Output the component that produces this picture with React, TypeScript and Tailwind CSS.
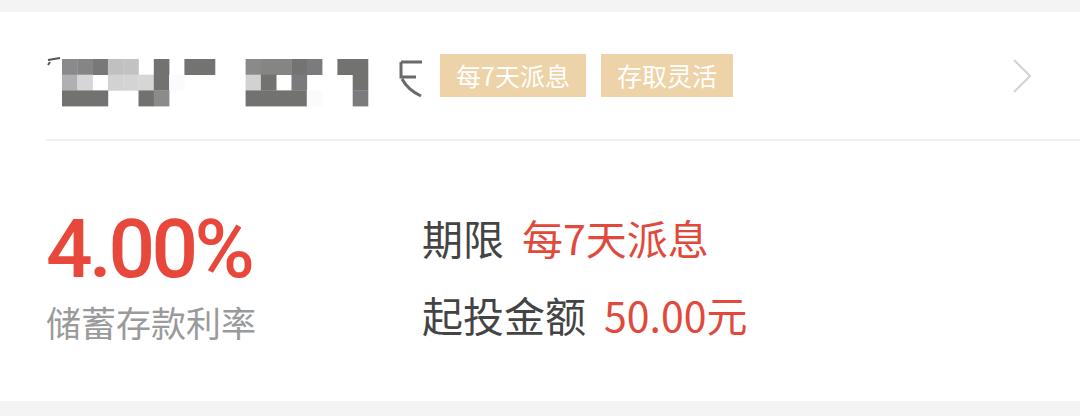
import React from 'react'

const cjk = { fontFamily: '"Noto Sans CJK SC", "Noto Sans", sans-serif' }

// pixelated (mosaic) product name, blocks of ~15.3px
const mosaic: [number, number, number, string][] = [
  // col, row, span, colour
  [0, 0, 1, '#8a898b'],
  [1, 0, 1, '#858684'],
  [2, 0, 1, '#787779'],
  [3, 0, 1, '#c0c0c0'],
  [4, 0, 1, '#c2c2c2'],
  [6, 0, 1, '#727370'],
  [8, 0, 2, '#737472'],
  [0, 1, 1, '#b0afb1'],
  [1, 1, 1, '#d6d5d7'],
  [3, 1, 1, '#d2d2d2'],
  [4, 1, 1, '#d4d4d6'],
  [5, 1, 1, '#d6d6d6'],
  [6, 1, 1, '#727370'],
  [7, 1, 1, '#fcfafc'],
  [0, 2, 3, '#727370'],
  [5, 2, 1, '#717270'],
  [6, 2, 1, '#8b8c8a'],
  [12, 0, 1, '#8a898b'],
  [13, 0, 2, '#858684'],
  [15, 0, 1, '#737472'],
  [16, 0, 1, '#7b7a7c'],
  [18, 0, 2, '#727370'],
  [12, 1, 1, '#d2d2d2'],
  [13, 1, 1, '#727370'],
  [15, 1, 1, '#7a797b'],
  [19, 1, 1, '#727370'],
  [12, 2, 4, '#727370'],
  [16, 2, 1, '#fcfafc'],
  [19, 2, 1, '#7b7a7c'],
]

const Mosaic = () => (
  <svg width="380" height="70" viewBox="0 0 380 70" className="shrink-0">
    <path d="M2 19 L14 17 M4 21 L2 24" stroke="#555" strokeWidth="2" fill="none" />
    {mosaic.map(([c, r, s, col], i) => (
      <rect
        key={i}
        x={16 + c * 15.3}
        y={18 + r * 15.7}
        width={15.3 * s + 0.3}
        height={16}
        fill={col}
      />
    ))}
    <path
      d="M355 21 H376 M355 21 V36 H370 M356 38 Q362 49 375 55"
      stroke="#6a6a6a"
      strokeWidth="3"
      fill="none"
    />
  </svg>
)

const Tag = ({ text }: { text: string }) => (
  <span className="h-[43px] px-[16px] flex items-center bg-[#eed3a8] text-white text-[25px] leading-none">
    {text}
  </span>
)

export default function App() {
  return (
    <div className="w-[1080px] h-[416px] bg-[#f4f4f4] pt-[12px]" style={cjk}>
      <div className="h-[389px] bg-white pl-[46px]">
        <div className="h-[129px] flex items-center border-b-2 border-[#f0f0f0] pr-[46px]">
          <Mosaic />
          <div className="flex gap-[15px] ml-[14px]">
            <Tag text="每7天派息" />
            <Tag text="存取灵活" />
          </div>
          <svg width="22" height="38" viewBox="0 0 22 38" className="ml-auto mr-[1px]">
            <path d="M3 3 L19 19 L3 35" stroke="#d4d4d4" strokeWidth="2.2" fill="none" />
          </svg>
        </div>
        <div className="flex pt-[64px]">
          <div className="w-[376px] flex flex-col pt-[3px]">
            <div
              className="text-[82px] leading-none font-medium text-[#e8483b] tracking-[-3.5px]"
              style={{ fontFamily: 'Roboto, "Liberation Sans", sans-serif' }}
            >
              4.00%
            </div>
            <div className="mt-[14px] text-[35px] leading-none text-[#9a9a9a]">储蓄存款利率</div>
          </div>
          <div className="flex flex-col gap-[36px] pt-[12px]">
            <div className="flex items-center text-[41px] leading-none">
              <span className="text-[#444]">期限</span>
              <span className="ml-[18px] text-[#e0493c]">每7天派息</span>
            </div>
            <div className="flex items-center text-[41px] leading-none">
              <span className="text-[#444]">起投金额</span>
              <span className="ml-[18px] text-[#e0493c]">50.00元</span>
            </div>
          </div>
        </div>
      </div>
    </div>
  )
}
